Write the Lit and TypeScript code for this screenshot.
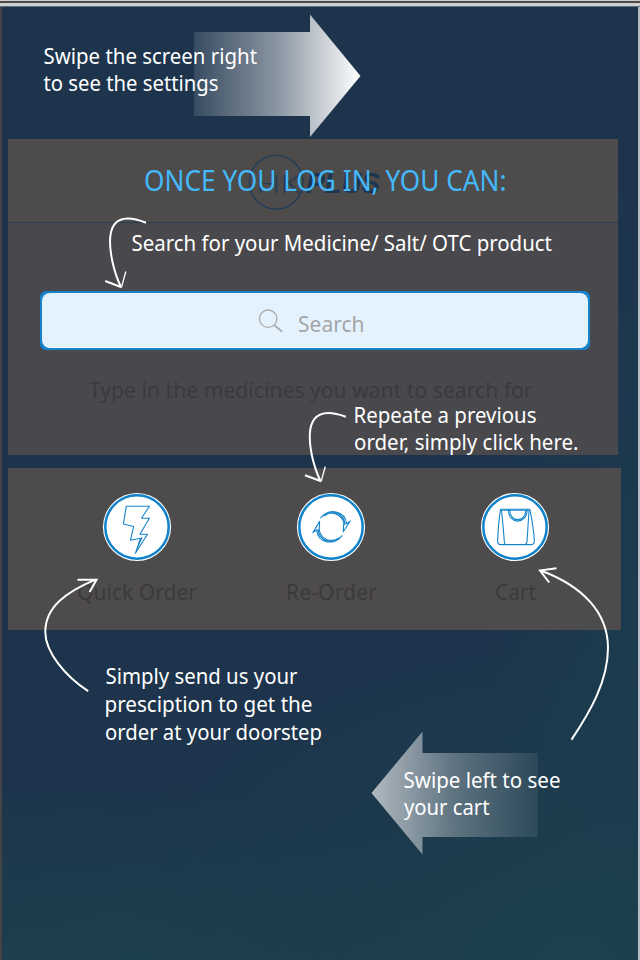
import { LitElement, html, svg, css } from "lit";
import { customElement, property } from "lit/decorators.js";

type Line = { t: string; x: number; y: number; w: number };

const NOTES: Line[] = [
  { t: "Swipe the screen right", x: 43.5, y: 63.5, w: 213.5 },
  { t: "to see the settings", x: 43.5, y: 91, w: 175 },
  { t: "Search for your Medicine/ Salt/ OTC product", x: 131.5, y: 250.5, w: 420.5 },
  { t: "Repeate a previous", x: 353.5, y: 422.5, w: 183 },
  { t: "order, simply click here.", x: 354, y: 449.7, w: 224.5 },
  { t: "Simply send us your", x: 105.5, y: 684, w: 192 },
  { t: "presciption to get the", x: 104.5, y: 711.8, w: 208 },
  { t: "order at your doorstep", x: 105, y: 739.5, w: 217 },
  { t: "Swipe left to see", x: 403.5, y: 787.5, w: 157 },
  { t: "your cart", x: 404, y: 815.2, w: 85.5 },
];

@customElement("fit-label")
export class FitLabel extends LitElement {
  @property() text = "";
  @property({ type: Number }) width = 0;
  static styles = css`
    :host { display: block; }
    svg { display: block; overflow: visible; height: 30px; }
    text { font: 22px "Noto Sans", sans-serif; fill: currentColor; }
  `;
  render() {
    return html`<svg width=${this.width}>
      <text y="22" textLength=${this.width} lengthAdjust="spacingAndGlyphs">${this.text}</text>
    </svg>`;
  }
}

@customElement("round-action")
export class RoundAction extends LitElement {
  @property() label = "";
  @property() icon = "";
  @property({ type: Number }) width = 0;
  static styles = css`
    :host { display: flex; flex-direction: column; align-items: center; color: #3b3a3b; }
    .disc { display: block; width: 70px; height: 70px; margin-bottom: 16px; }
    .line { fill: none; stroke: #1684c8; stroke-width: 1.1; stroke-linejoin: round; }
    .ring { fill: #fff; stroke: #1082ca; stroke-width: 2.5; }
  `;
  glyph() {
    if (this.icon === "bolt")
      return svg`<path class="line" d="M24.3 14.2H47.5L39.5 26.2H47.4L37.9 42.2H45.5L33.4 61.2L38.6 46.2L28.5 48.2L31.6 34.5L21.4 32Z M38.6 46.2L39.8 45.8L34.8 57.2"/>`;
    if (this.icon === "cycle")
      return svg`
        <path class="line" d="M24.5 26.2C33 15.5 49 18.5 50.6 31.8L54.1 29.2L47.2 39.8L47.8 31.6L49.2 32.3C47.5 20.5 34 17 27.5 24"/>
        <path class="line" d="M28.5 23.8C36 18.5 46 22 48 31.6"/>
        <path class="line" d="M46.4 43.4C38 54 22 51.5 20.6 38L16.9 40.6L23.6 29.4L23.2 38.2L21.8 37.6C23.5 49.5 37 52.5 43.4 45.6"/>
        <path class="line" d="M42.5 46.1C35 51 25 47.5 23.2 38.2"/>`;
    return svg`
      <path class="line" d="M20.5 17.2H49.7C51.2 23 54.3 42 54.3 49.5Q54 52.6 51.5 52.6H20Q17.6 52.4 17.6 49.5C17.8 42 19.4 24 20.5 17.2Z"/>
      <path class="line" d="M20.8 18.2H49.4 M21.3 18Q22.2 22 24.4 50.5Q24.6 52 26 52.5 M49.2 18Q48.6 24 47 50Q46.9 52 44.5 52.5"/>
      <path class="line" d="M28.3 17.5C28.3 33 47.2 33 47.2 17.5 M29.6 17.5C29.8 31 45.9 31 45.9 17.5"/>`;
  }
  render() {
    return html`<svg class="disc" viewBox="0 0 70 70">
        <circle cx="35" cy="35" r="34.1" fill="#fff" />
        <circle class="ring" cx="35" cy="35" r="31.7" />
        ${this.glyph()}
      </svg>
      <fit-label .text=${this.label} .width=${this.width}></fit-label>`;
  }
}

@customElement("app-root")
export class AppRoot extends LitElement {
  static styles = css`
    :host { display: block; position: relative; width: 640px; height: 960px; overflow: hidden; }
    * { box-sizing: border-box; }
    .frame { height: 960px; display: flex; flex-direction: column; background: #1d344c; }
    .bar { flex: none; height: 7px; background: linear-gradient(#ccd1cf 0 1px, #51484b 1px 3px, #ccd2cf 3px 6px, #5c7081 6px); }
    .screen {
      flex: 1; display: flex; flex-direction: column; gap: 13px; padding: 131.5px 0 0 6px;
      border-left: 2px solid #464344; border-right: 2px solid #b4bbc3;
      background:
        radial-gradient(ellipse 480px 330px at 90% 100%, #1c414d, #1c404c00),
        radial-gradient(ellipse 430px 230px at 12% 105%, #1d424c, #1d424c00),
        radial-gradient(ellipse 150px 430px at 100% 64%, #1c3b4f, #1c3b4f00),
        #1d344c;
    }
    .panel { background: #4e4b4c; }
    .search { width: 610px; height: 316.5px; background: #49484c; display: flex; flex-direction: column; }
    .head { flex: none; height: 84.5px; border-bottom: 1.5px solid #253c55; background: #4e4b4b; padding: 15.5px 0 0 239px; }
    .logo { display: block; width: 150px; height: 60px; overflow: visible; }
    .body { display: flex; flex-direction: column; align-items: flex-start; gap: 26px; padding: 67.5px 0 0 32px; }
    .box { width: 550px; height: 59.5px; background: #1682ca; border-radius: 6px; padding: 2px; }
    .field { height: 100%; border-radius: 8px; background: #e4f2fe; border-bottom: 1.5px solid #f5fbff; display: flex; gap: 13.5px; color: #a5a6a7; padding: 16.5px 0 0 216px; }
    .glass { width: 26px; height: 26px; }
    .field fit-label { margin-top: 1px; }
    .hint { color: #3b3a3c; margin: 0 0 0 48.5px; }
    .actions { width: 613px; height: 161.5px; display: flex; align-items: flex-start; padding: 24px 0 0 69px; }
    .reorder { margin-left: 88.5px; }
    .cart { margin-left: 103.5px; }
    .coach { position: absolute; left: 0; top: 0; width: 640px; height: 960px; pointer-events: none; }
    .note { font: 22px "Noto Sans", sans-serif; fill: #fff; }
    .title { font: 28.3px "Noto Sans", sans-serif; fill: #43b9fb; }
    .hk { font: 300 25px "Open Sans", "Noto Sans", sans-serif; fill: #1f3b57; }
    .plus { font: italic 700 29px "Liberation Sans", sans-serif; fill: #1d3650; }
    .curve { fill: none; stroke: #fff; stroke-width: 2; }
    .thin { stroke-width: 1.3; }
  `;

  render() {
    return html`
      <div class="frame">
        <div class="bar"></div>
        <main class="screen">
          <section class="panel search">
            <div class="head">
              <svg class="logo" viewBox="0 0 150 60">
                <circle cx="29.2" cy="28.2" r="26.8" fill="none" stroke="#203c58" stroke-width="1.4" />
                <text class="hk" x="9" y="38.5" textLength="44" lengthAdjust="spacingAndGlyphs">HK</text>
                <text class="plus" x="59" y="38.8" textLength="74" lengthAdjust="spacingAndGlyphs">PLUS</text>
              </svg>
            </div>
            <div class="body">
              <div class="box">
                <div class="field">
                  <svg class="glass" viewBox="0 0 26 26" fill="none" stroke="#a9abad">
                    <circle cx="10.2" cy="9.7" r="8.7" stroke-width="1.3" />
                    <path d="M16 16L24.3 22.7" stroke-width="1.8" />
                  </svg>
                  <fit-label .text=${"Search"} .width=${66.5}></fit-label>
                </div>
              </div>
              <fit-label class="hint" .text=${"Type in the medicines you want to search for"} .width=${443.5}></fit-label>
            </div>
          </section>
          <section class="panel actions">
            <round-action icon="bolt" label="Quick Order" .width=${120}></round-action>
            <round-action class="reorder" icon="cycle" label="Re-Order" .width=${91}></round-action>
            <round-action class="cart" icon="bag" label="Cart" .width=${41}></round-action>
          </section>
        </main>
      </div>
      <svg class="coach" viewBox="0 0 640 960">
        <defs>
          <linearGradient id="right"><stop offset="0" stop-color="#fff" stop-opacity=".12" /><stop offset=".5" stop-color="#fff" stop-opacity=".48" /><stop offset="1" stop-color="#fff" /></linearGradient>
          <linearGradient id="left"><stop offset="0" stop-color="#fff" stop-opacity=".65" /><stop offset=".5" stop-color="#fff" stop-opacity=".29" /><stop offset="1" stop-color="#fff" stop-opacity=".07" /></linearGradient>
        </defs>
        <path fill="url(#right)" d="M194 32H310V14.5L360.5 76L310 137V116H194Z" />
        <path fill="url(#left)" d="M538 753H422.5V731.5L371.5 793L422.5 854.5V837H538Z" />
        <path class="curve" d="M146 222.8C114 210 105 227 112.5 262C115 273 118 281 121 287M105.2 281L121.5 287.3" />
        <path class="curve thin" d="M121.5 287.3L125.8 271.5" />
        <path class="curve" d="M345.8 416.8C314 405 305 422 312 456C314.5 467 317.5 475 320.5 481M305 475.3L321.2 481.3" />
        <path class="curve thin" d="M321.2 481.3L325.3 466.5" />
        <path class="curve" d="M88.2 691.2C65 676 45.3 652 45.3 632C45.3 607 66 592 96 579.4M77.5 579.7H96.5L89.6 592" />
        <path class="curve" d="M571.5 739.6C590 712 608 681 608 648C608 613 583 586 540.5 570.5M556.5 568.3L540 570.5L549.2 582.5" />
        <text class="title" x="144" y="190.5" textLength="362.5" lengthAdjust="spacingAndGlyphs">ONCE YOU LOG IN, YOU CAN:</text>
        ${NOTES.map((n) => svg`<text class="note" x=${n.x} y=${n.y} textLength=${n.w} lengthAdjust="spacingAndGlyphs">${n.t}</text>`)}
      </svg>
    `;
  }
}
